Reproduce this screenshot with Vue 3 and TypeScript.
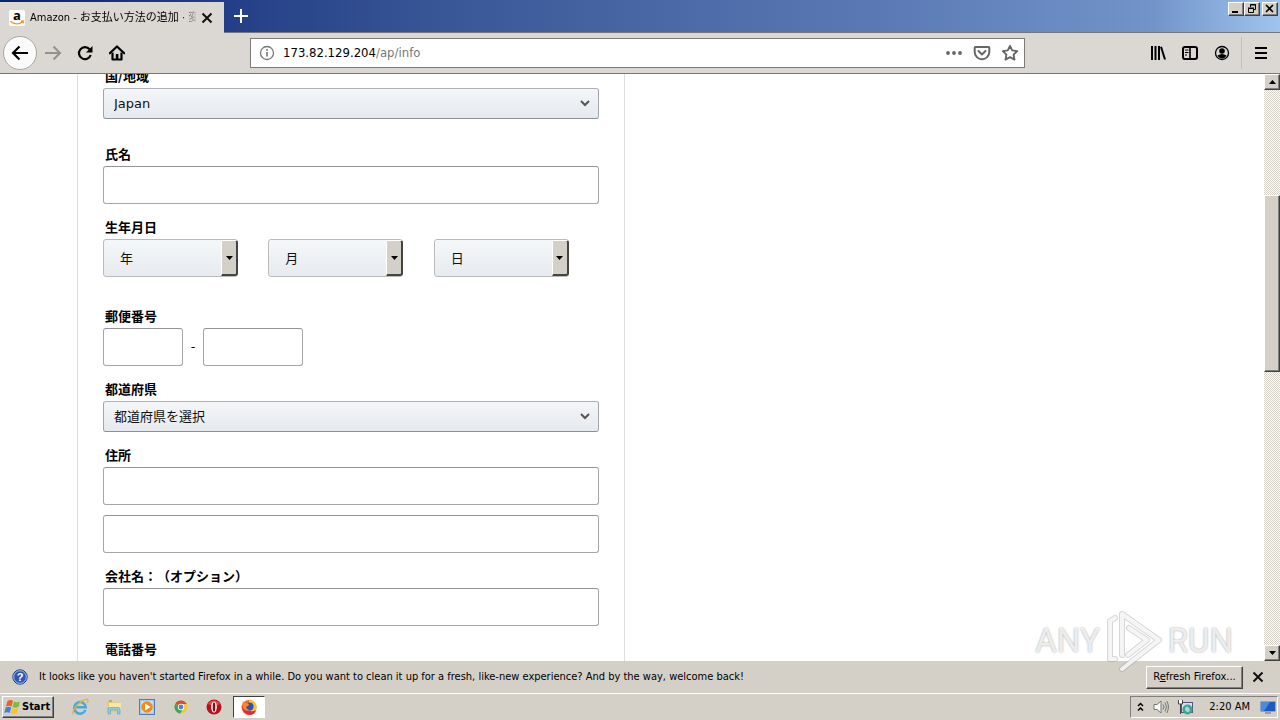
<script setup lang="ts">
import { ref } from 'vue'

const tabTitle = 'Amazon - お支払い方法の追加 · 変更'
const country = ref('Japan')
const prefecture = ref('都道府県を選択')
const dateParts = [
  { id: 'year', text: '年', name: '生年' },
  { id: 'month', text: '月', name: '生月' },
  { id: 'day', text: '日', name: '生日' },
]
</script>

<template>
  <div class="screen">
    <header class="titlebar">
      <div class="tab">
        <svg class="favicon" viewBox="0 0 16 16" aria-hidden="true">
          <rect width="16" height="16" rx="2" fill="#fff" />
          <text x="8" y="10" text-anchor="middle" font-family="Open Sans, sans-serif" font-weight="bold" font-size="13">a</text>
          <path d="M1.5 11.2C5 14.8 10.5 14.6 13.8 11.8M12 11.2l2.4-.1-.4 2.2" fill="none" stroke="#f59a1f" stroke-width="1.4" />
        </svg>
        <span class="tab-title">{{ tabTitle }}</span>
        <button class="plain" aria-label="Close tab">
          <svg width="16" height="16" viewBox="0 0 16 16"><path d="M3.500 3.500l9 9M12.500 3.500l-9 9" stroke="#111" stroke-width="2" /></svg>
        </button>
      </div>
      <button class="plain new-tab" aria-label="New tab">
        <svg width="16" height="16" viewBox="0 0 16 16"><path d="M8 1v14M1 8h14" stroke="#fff" stroke-width="2" /></svg>
      </button>
      <div class="window-buttons">
        <button class="raised" aria-label="Minimize"><svg width="12" height="10" viewBox="0 0 12 10"><path d="M2 8h6" stroke="#000" stroke-width="2" /></svg></button>
        <button class="raised" aria-label="Restore"><svg width="12" height="10" viewBox="0 0 12 10"><path d="M4.500 3V.5h5v5H8M4 1h6M2.500 4.500h5v4h-5zM2 4h6" fill="none" stroke="#000" /></svg></button>
        <button class="raised close" aria-label="Close"><svg width="12" height="10" viewBox="0 0 12 10"><path d="M2 1l7 7M9 1L2 8" stroke="#000" stroke-width="1.600" /></svg></button>
      </div>
    </header>

    <nav class="toolbar" aria-label="Navigation">
      <div class="nav-buttons">
        <button class="back" aria-label="Back">
          <svg width="18" height="18" viewBox="0 0 18 18"><path d="M17 9H2M8.500 2.500L2 9l6.500 6.500" fill="none" stroke="#000" stroke-width="2.200" /></svg>
        </button>
        <button class="plain nav" aria-label="Forward">
          <svg width="18" height="18" viewBox="0 0 18 18"><path d="M1 9h15M9.500 2.500L16 9l-6.500 6.500" fill="none" stroke="#94918d" stroke-width="2" /></svg>
        </button>
        <button class="plain nav" aria-label="Reload">
          <svg width="16" height="16" viewBox="0 0 16 16"><path d="M12.600 4.300A6 6 0 1 0 13.700 10" fill="none" stroke="#000" stroke-width="2.200" /><path d="M15.500 1v6.500H9z" /></svg>
        </button>
        <button class="plain nav" aria-label="Home">
          <svg width="16" height="16" viewBox="0 0 16 16"><path d="M.8 8.300L8 1.500l7.200 6.800" fill="none" stroke="#000" stroke-width="2.200" stroke-linejoin="round" stroke-linecap="round" /><path d="M3.500 7.500v7h9v-7" fill="none" stroke="#000" stroke-width="2.200" stroke-linejoin="round" /><path d="M6.800 9h2.600v5H6.800z" /></svg>
        </button>
      </div>
      <div class="spring"></div>
      <div class="urlbar">
        <svg width="16" height="16" viewBox="0 0 16 16" aria-hidden="true"><circle cx="8" cy="8" r="6.500" fill="none" stroke="#777" stroke-width="1.300" /><path d="M8 7v4.500M8 4v1.700" stroke="#777" stroke-width="1.600" /></svg>
        <a class="url" href="#"><span class="host">173.82.129.204</span>/ap/info</a>
        <button class="plain" aria-label="Page actions"><svg width="18" height="16" viewBox="0 0 18 16" fill="#666"><circle cx="3" cy="8" r="1.900" /><circle cx="9" cy="8" r="1.900" /><circle cx="15" cy="8" r="1.900" /></svg></button>
        <button class="plain" aria-label="Save to Pocket"><svg width="18" height="16" viewBox="0 0 18 16" fill="none" stroke="#666" stroke-width="2"><path d="M2.500 2h13q.8 0 .8.800V7a7.300 7.300 0 0 1-14.600 0V2.800Q1.700 2 2.500 2z" /><path d="M5.500 6L9 9.500 12.500 6" stroke-linecap="round" stroke-linejoin="round" /></svg></button>
        <button class="plain" aria-label="Bookmark"><svg width="18" height="18" viewBox="0 0 18 18" fill="none" stroke="#666" stroke-width="1.900" stroke-linejoin="round"><path d="M9 1.800l2.200 4.600 5 .7-3.600 3.500.9 5L9 13.200l-4.500 2.400.9-5-3.600-3.500 5-.7z" /></svg></button>
      </div>
      <div class="spring"></div>
      <div class="tool-buttons">
        <button class="plain nav" aria-label="Library"><svg width="16" height="16" viewBox="0 0 16 16" stroke="#000" stroke-width="2"><path d="M2 1v14M5.500 1v14M9 1v14M11 1.800l4 12.700" /></svg></button>
        <button class="plain nav" aria-label="Sidebars"><svg width="16" height="16" viewBox="0 0 16 16" fill="none" stroke="#000"><rect x="1" y="2" width="14" height="12" rx="2" stroke-width="2" /><path d="M8 2v12" stroke-width="1.600" /><path d="M3 5h3.500M3 7.500h3.500M3 10h2" /></svg></button>
        <button class="plain nav" aria-label="Account"><svg width="16" height="16" viewBox="0 0 16 16"><circle cx="8" cy="8" r="6.500" fill="none" stroke="#000" stroke-width="1.300" /><circle cx="8" cy="6" r="2.800" /><path d="M3.500 10.500q4.500-3 9 0-1.500 3-4.500 3t-4.500-3z" /></svg></button>
        <span class="separator"></span>
        <button class="plain nav" aria-label="Menu"><svg width="16" height="16" viewBox="0 0 16 16"><path d="M2 3h12M2 8h12M2 13h12" stroke="#000" stroke-width="2" /></svg></button>
      </div>
    </nav>

    <div class="viewport">
      <main class="page">
        <form class="card" @submit.prevent>
          <div class="field country">
            <label for="country">国/地域</label>
            <div class="picker">
              <select id="country" v-model="country"><option>Japan</option></select>
              <svg class="chevron" viewBox="0 0 10 7" aria-hidden="true"><path d="M1 1l4 4 4-4" fill="none" stroke="#555" stroke-width="2" /></svg>
            </div>
          </div>
          <div class="field">
            <label for="fullname">氏名</label>
            <input id="fullname" type="text" />
          </div>
          <div class="field birth">
            <label for="year">生年月日</label>
            <div class="dates">
              <div v-for="part in dateParts" :key="part.id" class="picker date">
                <select :id="part.id" :aria-label="part.name"><option>{{ part.text }}</option></select>
                <span class="drop" aria-hidden="true"><svg width="7" height="4" viewBox="0 0 7 4"><path d="M0 0h7L3.500 4z" /></svg></span>
              </div>
            </div>
          </div>
          <div class="field">
            <label for="zip1">郵便番号</label>
            <div class="zip">
              <input id="zip1" class="zip-first" type="text" />
              <span class="dash">-</span>
              <input id="zip2" class="zip-second" type="text" aria-label="郵便番号 後半" />
            </div>
          </div>
          <div class="field">
            <label for="prefecture">都道府県</label>
            <div class="picker">
              <select id="prefecture" v-model="prefecture"><option>都道府県を選択</option></select>
              <svg class="chevron" viewBox="0 0 10 7" aria-hidden="true"><path d="M1 1l4 4 4-4" fill="none" stroke="#555" stroke-width="2" /></svg>
            </div>
          </div>
          <div class="field">
            <label for="address1">住所</label>
            <input id="address1" type="text" />
            <input id="address2" class="second-line" type="text" aria-label="住所 2" />
          </div>
          <div class="field">
            <label for="company">会社名：（オプション）</label>
            <input id="company" type="text" />
          </div>
          <div class="field">
            <label for="phone">電話番号</label>
            <input id="phone" type="text" />
          </div>
        </form>
      </main>
      <div class="scrollbar">
        <button class="raised arrow" aria-label="Scroll up"><svg width="7" height="4" viewBox="0 0 7 4"><path d="M0 4h7L3.500 0z" /></svg></button>
        <div class="track"><div class="thumb raised"></div></div>
        <button class="raised arrow" aria-label="Scroll down"><svg width="7" height="4" viewBox="0 0 7 4"><path d="M0 0h7L3.500 4z" /></svg></button>
      </div>
    </div>

    <aside class="notice">
      <svg width="16" height="16" viewBox="0 0 16 16" aria-hidden="true"><circle cx="8" cy="8" r="7.200" fill="#2a55b8" stroke="#1c3b8c" /><circle cx="8" cy="8" r="6.300" fill="none" stroke="#a9c1f0" /><text x="8" y="12" text-anchor="middle" font-family="Liberation Sans, sans-serif" font-weight="bold" font-size="11" fill="#fff">?</text></svg>
      <p>It looks like you haven't started Firefox in a while. Do you want to clean it up for a fresh, like-new experience? And by the way, welcome back!</p>
      <button class="raised refresh">R<u>e</u>fresh Firefox...</button>
      <button class="plain dismiss" aria-label="Dismiss"><svg width="12" height="12" viewBox="0 0 12 12"><path d="M1.500 1.500l9 9M10.500 1.500l-9 9" stroke="#111" stroke-width="2" /></svg></button>
    </aside>

    <footer class="taskbar">
      <button class="raised start">
        <svg width="17" height="16" viewBox="0 0 17 16" aria-hidden="true"><path d="M3.500 2q3-1.800 5.500 0L7.500 7.500q-2.600-1.600-5.500 0z" fill="#e8622a" /><path d="M10 2.500q3 1.600 6 0L14.500 8q-3 1.500-6 0z" fill="#7dbb3c" /><path d="M1.700 8.500q3-1.600 5.500 0L5.700 14Q3 12.400.2 14z" fill="#3f83d3" /><path d="M8.200 9q3 1.600 6 0l-1.500 5.500q-3 1.500-6 0z" fill="#f5c432" /></svg>
        Start
      </button>
      <div class="launchers">
        <button class="plain" aria-label="Internet Explorer"><svg width="18" height="18" viewBox="0 0 18 18"><path d="M14.500 11.800A5.800 5.800 0 1 1 14.800 9.300H5" fill="none" stroke="#45a9dd" stroke-width="2.400" /><path d="M2.500 16.500C-.8 14 10 .5 16.500 1.500c1 .5.500 2-.3 3.300" fill="none" stroke="#e5b52b" stroke-width="1.300" /></svg></button>
        <button class="plain" aria-label="Explorer"><svg width="18" height="18" viewBox="0 0 18 18"><path d="M2 3h5l1 1.500h7V14H2z" fill="#eacb65" /><path d="M4 5h12v7H4z" fill="#f8e7a0" /><path d="M4 3h3" stroke="#55a84f" /><path d="M3 16v-5q0-1.500 1.500-1.500h9q1.500 0 1.500 1.500v5h-2.500v-4h-7v4z" fill="#8ccbea" stroke="#569fc5" stroke-width=".6" /></svg></button>
        <button class="plain" aria-label="Media Player"><svg width="18" height="18" viewBox="0 0 18 18"><rect x="1.500" y="1.500" width="15" height="15" fill="#a8cdec" stroke="#4c7db6" /><rect x="3.500" y="3.500" width="11" height="11" fill="#d8eaf7" /><circle cx="9" cy="9" r="5.800" fill="#f28b1c" /><path d="M7 5.500v7L12.500 9z" fill="#fff" /></svg></button>
        <button class="plain" aria-label="Chrome"><svg width="18" height="18" viewBox="0 0 18 18"><circle cx="9" cy="9" r="6.500" fill="#f4ca32" /><path d="M9 9L3.300 5.800A6.500 6.500 0 0 1 14.700 6H9z" fill="#da4a38" /><path d="M9 9L3.300 5.800A6.500 6.500 0 0 0 8.500 15.500L11 10z" fill="#3fa454" /><circle cx="9" cy="9" r="3.200" fill="#fff" /><circle cx="9" cy="9" r="2.400" fill="#4486e8" /></svg></button>
        <button class="plain" aria-label="Opera"><svg width="18" height="18" viewBox="0 0 18 18"><circle cx="9" cy="9" r="7.500" fill="#b5121b" /><path d="M3 6a7 7 0 0 1 12 0q-6 3-12 0z" fill="#d94b50" /><ellipse cx="9" cy="9" rx="2.800" ry="5.500" fill="#fff" /><ellipse cx="9" cy="9" rx="1.300" ry="4.800" fill="#8c0d14" /></svg></button>
      </div>
      <button class="running" aria-label="Firefox"><svg width="18" height="18" viewBox="0 0 18 18"><circle cx="9" cy="9.500" r="7.500" fill="#f4682a" /><path d="M9 2q7 0 7.500 7 0 5-4 7.500L9 10z" fill="#fdc22d" /><path d="M2 7q0 9 8 10 5-.5 6-5-7 4-14-5z" fill="#e5244f" /><circle cx="9.500" cy="8.500" r="4" fill="#2956b4" /><path d="M3 3q1 2 3 2 3 0 3 2l-3 2q1 3 4 3-5 2-7-2-1.500-4 0-7z" fill="#fb8b24" /></svg></button>
      <div class="tray">
        <svg width="9" height="11" viewBox="0 0 9 11" aria-hidden="true"><path d="M2 4l2.500-2.500L7 4M2 8.500L4.500 6 7 8.500" fill="none" stroke="#000" stroke-width="1.500" /></svg>
        <svg width="16" height="16" viewBox="0 0 16 16" aria-hidden="true"><path d="M1 5.500h3L8 2v12l-4-3.500H1z" fill="#f8f8f8" stroke="#777" /><path d="M10 5.500q2 2.500 0 5M12 3.500q3 4.500 0 9M13.800 2q3.300 6 0 12" fill="none" stroke="#777" /></svg>
        <svg width="17" height="17" viewBox="0 0 17 17" aria-hidden="true"><rect x="4.500" y="3.500" width="11" height="10" fill="#cfe4e3" stroke="#557" /><path d="M1.500 1v4h4V1M3.500 5v10" stroke="#444" fill="#fff" /><circle cx="10.500" cy="10.500" r="5" fill="#3fa596" /><path d="M8 9q2-3 4 0t-1 4q-3 0-3-4z" fill="#a5ddd0" /></svg>
        <time>2:20 AM</time>
        <svg width="16" height="14" viewBox="0 0 16 14" aria-hidden="true"><rect x=".5" y="1.500" width="15" height="10" rx="1" fill="#1e59bd" stroke="#8fa4c0" /><path d="M1 2h9L4 11H1z" fill="#4c8ae0" /><path d="M5 13h6" stroke="#667" /></svg>
      </div>
    </footer>

    <div class="watermark" aria-hidden="true">
      <span>ANY</span>
      <svg width="62" height="64" viewBox="0 0 62 64" fill="none" stroke-linejoin="round" stroke-linecap="round">
        <path d="M12 9l-5 3v38h5M19 46V5l37 26-37 29M25 46l19-15-18-12" stroke="#999" stroke-opacity=".4" stroke-width="6" />
        <path d="M12 9l-5 3v38h5M19 46V5l37 26-37 29M25 46l19-15-18-12" stroke="#fafafa" stroke-opacity=".85" stroke-width="4" />
      </svg>
      <span>RUN</span>
    </div>
  </div>
</template>

<style>
html, body { margin: 0; }
</style>

<style scoped>
.screen {
  position: relative;
  display: flex;
  flex-direction: column;
  height: 100vh;
  overflow: hidden;
  background: #fff;
  color: #000;
  font: 11px/16px "DejaVu Sans Condensed", "DejaVu Sans", "Noto Sans CJK JP", sans-serif;
}
.screen * { box-sizing: border-box; }
svg { display: block; flex: none; }
button { margin: 0; padding: 0; font: inherit; color: inherit; }
.plain {
  display: flex;
  align-items: center;
  justify-content: center;
  border: 0;
  background: none;
}
.raised {
  border: 1px solid;
  border-color: #fff #404040 #404040 #fff;
  background: #d4d0c8;
  box-shadow: inset -1px -1px #808080;
}
.titlebar {
  display: flex;
  flex: none;
  height: 33px;
  border-bottom: 1px solid #777;
  background: linear-gradient(90deg, #0a246a, #243f87 18%, #3a5897 36%, #5c7bb6 70%, #7193c9 90%, #a0c4ee);
}
.tab {
  display: flex;
  align-items: center;
  width: 224px;
  height: 31px;
  margin-top: 2px;
  padding: 0 9px;
  background: #dbd8d3;
  box-shadow: 0 1px #dbd8d3;
}
.favicon { width: 16px; height: 16px; overflow: visible; }
.tab-title {
  flex: 1;
  margin: 0 3px 0 5px;
  overflow: hidden;
  white-space: nowrap;
  mask-image: linear-gradient(90deg, #000 152px, transparent 168px);
}
.new-tab { width: 34px; height: 32px; }
.window-buttons { display: flex; margin: 2px 2px 0 auto; }
.window-buttons .raised {
  display: flex;
  align-items: center;
  justify-content: center;
  width: 16px;
  height: 14px;
}
.window-buttons .close { margin-left: 2px; }
.toolbar {
  display: flex;
  flex: none;
  align-items: center;
  height: 41px;
  border-bottom: 1px solid #777;
  background: #dbd8d3;
}
.nav-buttons { display: flex; align-items: center; width: 133px; padding-left: 3px; }
.nav { width: 32px; height: 32px; }
.back {
  display: flex;
  align-items: center;
  justify-content: center;
  width: 34px;
  height: 34px;
  border: 1px solid #aaa7a3;
  border-radius: 50%;
  background: #fafafa;
}
.spring { flex: 117; }
.urlbar {
  display: flex;
  flex: 760;
  align-items: center;
  gap: 10px;
  height: 30px;
  padding: 0 5px 0 8px;
  border: 1px solid #7c7a77;
  background: #fff;
}
.url {
  flex: 1;
  margin-left: -2px;
  color: #777;
  font-size: 13px;
  text-decoration: none;
}
.host { color: #000; }
.tool-buttons { display: flex; align-items: center; width: 138px; }
.separator { width: 1px; height: 32px; margin: 0 3px; background: #c3c0bb; }
.viewport { display: flex; flex: 1; min-height: 0; }
.page { flex: 1; overflow: hidden; }
.card {
  display: flex;
  flex-direction: column;
  gap: 14px;
  max-width: 548px;
  margin: -7px 0 0 77px;
  padding: 0 25px;
  border: solid #ddd;
  border-width: 0 1px;
  font: 13px/18px "DejaVu Sans", "Noto Sans CJK JP", sans-serif;
}
.field { display: flex; flex-direction: column; gap: 3px; }
.country { margin-bottom: 12px; }
.birth { margin-bottom: 16px; }
label {
  height: 18px;
  padding-left: 2px;
  font: bold 13px/18px "Noto Sans CJK JP", sans-serif;
  text-spacing-trim: space-all;
}
input {
  width: 100%;
  height: 38px;
  padding: 0 10px;
  border: 1px solid #a6a6a6;
  border-top-color: #949494;
  border-radius: 3px;
  background: #fff;
  font: inherit;
}
.second-line { margin-top: 7px; }
.picker { position: relative; }
select {
  display: block;
  width: 100%;
  height: 31px;
  padding: 0 10px;
  appearance: none;
  border: 1px solid;
  border-color: #adb1b8 #a2a6ac #8d9096;
  border-radius: 3px;
  background: linear-gradient(#f4f6f9, #e6e9ed);
  color: #111;
  font: 13px/18px "DejaVu Sans", "Noto Sans CJK JP", sans-serif;
}
#prefecture, .date select { font: 13px/18px "Noto Sans CJK JP", sans-serif; }
#prefecture { padding-bottom: 2px; }
.chevron { position: absolute; top: 12px; right: 9px; width: 10px; height: 7px; }
.dates { display: grid; grid-template-columns: repeat(3, 1fr); }
.date { width: 135px; }
.date select { height: 38px; padding: 0 16px; border-color: #bbb; background: linear-gradient(#f5f8fa, #e7eaee); }
.drop {
  position: absolute;
  top: 1px;
  right: 0;
  bottom: 1px;
  display: flex;
  align-items: center;
  justify-content: center;
  width: 17px;
  border: solid;
  border-width: 1px 2px 2px 1px;
  border-color: #fff #444 #444 #fff;
  border-radius: 0 3px 3px 0;
  background: #d4d0c8;
}
.zip { display: flex; align-items: center; }
.zip-first { width: 80px; }
.zip-second { width: 100px; }
.dash { width: 20px; text-align: center; }
.scrollbar { display: flex; flex: none; flex-direction: column; width: 16px; }
.arrow { display: flex; align-items: center; justify-content: center; width: 16px; height: 16px; }
.track {
  display: grid;
  flex: 1;
  grid-template-rows: 105fr 177fr 273fr;
  background: repeating-conic-gradient(#fff 0 25%, #d4d0c8 0 50%) 0 0 / 2px 2px;
}
.thumb { grid-row: 2; }
.notice {
  display: flex;
  flex: none;
  align-items: center;
  height: 32px;
  padding: 0 16px 0 12px;
  background: #d4d0c8;
}
.notice p { flex: 1; margin: 0 0 0 11px; white-space: nowrap; }
.refresh { width: 97px; height: 23px; }
.dismiss { width: 12px; margin-left: 9px; }
.taskbar {
  display: flex;
  flex: none;
  align-items: center;
  height: 27px;
  padding: 0 2px;
  border-top: 1px solid #fff;
  background: #d4d0c8;
}
.start {
  display: flex;
  align-items: center;
  gap: 1px;
  width: 52px;
  height: 22px;
  padding-left: 1px;
  font-weight: bold;
}
.launchers { display: flex; justify-content: space-between; width: 152px; margin: 0 10px 0 17px; }
.running {
  display: flex;
  align-items: center;
  justify-content: center;
  width: 32px;
  height: 22px;
  border: 1px solid;
  border-color: #404040 #fff #fff #404040;
  background: #fff;
}
.tray {
  display: flex;
  align-items: center;
  gap: 8px;
  height: 22px;
  margin-left: auto;
  padding: 0 1px 0 5px;
  border: 1px solid;
  border-color: #808080 #fff #fff #808080;
}
.tray time { margin: 0 2px 0 7px; white-space: nowrap; }
.watermark {
  position: absolute;
  right: 47px;
  bottom: 47px;
  display: flex;
  align-items: center;
  gap: 3px;
  color: rgba(250, 250, 250, .85);
  font: 33px/64px "Roboto", sans-serif;
  text-shadow: 0 0 2px #999;
  pointer-events: none;
}
</style>
